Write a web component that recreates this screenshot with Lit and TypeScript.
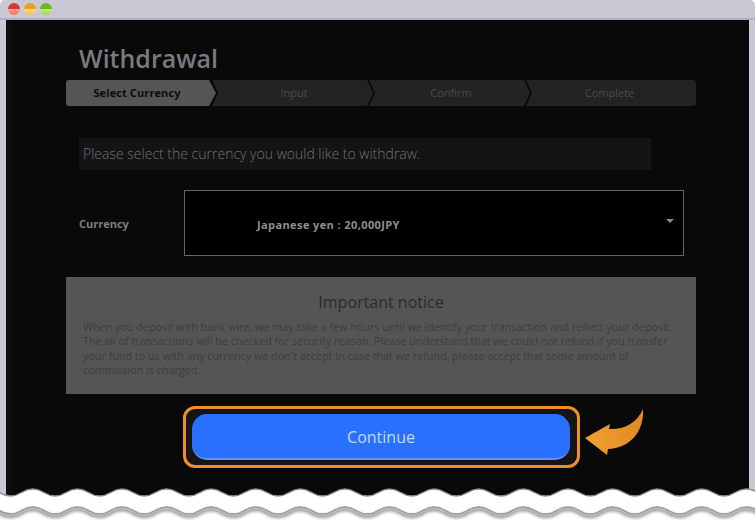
import { LitElement, html, css, svg } from 'lit';
import { customElement } from 'lit/decorators.js';

const STEPS = ['Select Currency', 'Input', 'Confirm', 'Complete'];

// one run of the torn edge, repeated across the page
function wavePath(y: number) {
  const period = 44.6;
  let d = `M-23 ${y}`;
  for (let x = -23; x < 770; x += period) {
    d += ` q${period / 4} -7 ${period / 2} 0 t${period / 2} 0`;
  }
  return d;
}

@customElement('app-root')
export class AppRoot extends LitElement {
  static styles = css`
    :host {
      display: block;
      position: relative;
      width: 755px;
      height: 526px;
      overflow: hidden;
      background: #fff;
      font-family: 'Open Sans', 'Noto Sans', sans-serif;
    }
    .window {
      height: 526px;
      background: #c9c9d6;
      border-radius: 5px 5px 0 0;
      display: flex;
      flex-direction: column;
    }
    .bar {
      flex: none;
      height: 18px;
      border-bottom: 2px solid #aeadc3;
      display: flex;
      align-items: center;
      gap: 4px;
      padding-left: 8px;
    }
    .dot {
      width: 12px;
      height: 12px;
      border-radius: 50%;
    }
    .red {
      background: linear-gradient(#d8392c 50%, #f8a59a 50%, #f46a5a);
    }
    .amber {
      background: linear-gradient(#f0a020 50%, #ffdc8c 50%, #fbc04e);
    }
    .green {
      background: linear-gradient(#6eb81e 50%, #c4ea84 50%, #9cd94c);
    }
    .panel {
      flex: 1;
      margin: 0 6px;
      background: #090909;
      border-left: 6px solid #0d0d0d;
      padding: 21px 53px 0 54px;
    }
    h1 {
      margin: 0 0 5px 13px;
      font-size: 25px;
      line-height: 34px;
      font-weight: 600;
      color: #777b80;
    }
    .steps {
      display: flex;
      height: 26px;
    }
    .step {
      height: 26px;
      line-height: 26px;
      text-align: center;
      font-size: 11px;
      background: #232323;
      color: #4a4a4a;
      margin-left: -4px;
      width: 161px;
      padding-left: 3px;
      box-sizing: border-box;
      clip-path: polygon(0 0, calc(100% - 6px) 0, 100% 50%, calc(100% - 6px) 100%, 0 100%, 6px 50%);
    }
    .step:first-child {
      margin-left: 0;
      width: 150px;
      padding: 0 8px 0 0;
      background: #555;
      color: #0c0c0c;
      font-weight: 700;
      letter-spacing: 0.1px;
      border-radius: 3px 0 0 3px;
      clip-path: polygon(0 0, calc(100% - 7px) 0, 100% 50%, calc(100% - 7px) 100%, 0 100%);
    }
    .step:last-child {
      width: 170px;
      padding: 0 3px 0 0;
      border-radius: 0 3px 3px 0;
      clip-path: polygon(0 0, 100% 0, 100% 100%, 0 100%, 6px 50%);
    }
    .message {
      margin: 32px 45px 0 13px;
      height: 32px;
      line-height: 32px;
      padding-left: 4px;
      background: #141414;
      color: #6b7378;
      font-size: 14px;
      font-weight: 300;
    }
    .field {
      display: flex;
      align-items: center;
      margin: 20px 12px 0 13px;
    }
    .field label {
      width: 105px;
      font-size: 11px;
      font-weight: 700;
      color: #7d7d7d;
    }
    .select {
      flex: 1;
      height: 66px;
      box-sizing: border-box;
      border: 1px solid #666;
      background: #000;
      display: flex;
      align-items: center;
      justify-content: space-between;
      padding: 0 9px 0 72px;
      font-size: 11px;
      font-weight: 700;
      letter-spacing: 0.4px;
      color: #8f8f8f;
    }
    .select span:first-child {
      padding-top: 2px;
    }
    .caret {
      width: 0;
      height: 0;
      margin-bottom: 4px;
      border: 4px solid transparent;
      border-top: 4px solid #8a8a8a;
      border-bottom: 0;
    }
    .notice {
      margin-top: 21px;
      height: 117px;
      box-sizing: border-box;
      background: #555;
      padding: 14px 17px 0;
      color: #3e3e3e;
      font-size: 10.75px;
      line-height: 14.3px;
    }
    .notice h2 {
      margin: 0 0 7px;
      text-align: center;
      font-size: 16px;
      line-height: 22px;
      font-weight: 400;
      color: #2b2b2b;
    }
    .notice p {
      margin: 0;
    }
    .action {
      display: flex;
      align-items: center;
      margin: 12px 0 0 117px;
    }
    .outline {
      width: 397px;
      height: 62px;
      box-sizing: border-box;
      border: 3px solid #ee9028;
      border-radius: 12px;
      background: #151515;
      padding: 5px 7px 5px 6px;
    }
    .continue {
      display: block;
      width: 100%;
      height: 46px;
      padding: 2px 0 0;
      border: 0;
      border-bottom: 2px solid #5f93ee;
      border-radius: 15px;
      background: #2970ff;
      color: #c4d8ff;
      font: 400 16px 'Open Sans', 'Noto Sans', sans-serif;
    }
    .arrow {
      position: absolute;
      left: 584px;
      top: 408px;
    }
    .tear {
      position: absolute;
      left: 0;
      top: 480px;
    }
  `;

  render() {
    return html`
      <div class="window">
        <div class="bar">
          <span class="dot red"></span>
          <span class="dot amber"></span>
          <span class="dot green"></span>
        </div>
        <div class="panel">
          <h1>Withdrawal</h1>
          <div class="steps">
            ${STEPS.map((s) => html`<div class="step">${s}</div>`)}
          </div>
          <div class="message">Please select the currency you would like to withdraw.</div>
          <div class="field">
            <label>Currency</label>
            <div class="select">
              <span>Japanese yen : 20,000JPY</span>
              <span class="caret"></span>
            </div>
          </div>
          <div class="notice">
            <h2>Important notice</h2>
            <p>
              When you deposit with bank wire, we may take a few hours until we identify your transaction and reflect your deposit.
              The all of transactions will be checked for security reason. Please understand that we could not refund if you transfer
              your fund to us with any currency we don't accept In case that we refund, please accept that some amount of
              commission is charged.
            </p>
          </div>
          <div class="action">
            <div class="outline"><button class="continue">Continue</button></div>
          </div>
        </div>
      </div>
      <svg class="arrow" width="60" height="48" viewBox="584 408 60 48">
        <defs>
          <linearGradient id="arrowFill" x1="0" x2="1" y1="0" y2="0">
            <stop offset="0" stop-color="#f0a030"></stop>
            <stop offset="1" stop-color="#e08a24"></stop>
          </linearGradient>
        </defs>
        <path
          fill="url(#arrowFill)"
          d="M585 438 L610 424 L609 429 C622 430 637 424 643 409 C644 426 636 440 622 446 C617 448 612 449 608 449 L607 455 Z"
        ></path>
      </svg>
      <svg class="tear" width="755" height="46" viewBox="0 480 755 46">
        <defs>
          <filter id="soft" x="-5%" y="-50%" width="110%" height="200%">
            <feGaussianBlur stdDeviation="1.6"></feGaussianBlur>
          </filter>
        </defs>
        ${svg`
          <path d="${wavePath(492.5)} V526 H-23 Z" fill="#fff"></path>
          <path d="${wavePath(492.5)}" fill="none" stroke="#8f8f8f" stroke-width="1.4"></path>
          <path d="${wavePath(513)}" fill="none" stroke="#999" stroke-width="3.5" filter="url(#soft)"></path>
          <path d="${wavePath(510.5)}" fill="none" stroke="#969696" stroke-width="1.4"></path>
        `}
      </svg>
    `;
  }
}
